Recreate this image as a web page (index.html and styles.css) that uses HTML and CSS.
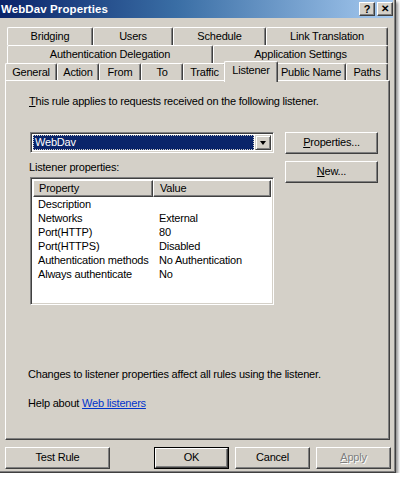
FILE: index.html
```html
<!DOCTYPE html>
<html>
<head>
<meta charset="utf-8">
<link rel="stylesheet" href="styles.css">
</head>
<body>
<div class="window">
  <div class="titlebar">
    <span class="title">WebDav Properties</span>
    <div class="tbtns">
      <span class="tbtn">?</span>
      <span class="tbtn close">✕</span>
    </div>
  </div>
  <div class="tabs">
    <div class="row r1">
      <div class="tab" style="width:86px">Bridging</div>
      <div class="tab" style="width:80px">Users</div>
      <div class="tab" style="width:93px">Schedule</div>
      <div class="tab" style="width:122px">Link Translation</div>
    </div>
    <div class="row r2">
      <div class="tab" style="width:206px">Authentication Delegation</div>
      <div class="tab" style="width:175px">Application Settings</div>
    </div>
    <div class="row r3">
      <div class="tab" style="width:52px">General</div>
      <div class="tab" style="width:42px">Action</div>
      <div class="tab" style="width:42px">From</div>
      <div class="tab" style="width:42px">To</div>
      <div class="tab" style="width:43px">Traffic</div>
      <div class="tab sel" style="width:54px">Listener</div>
      <div class="tab" style="width:70px">Public Name</div>
      <div class="tab" style="width:42px">Paths</div>
    </div>
  </div>
  <div class="panel">
    <p class="intro"><u>T</u>his rule applies to requests received on the following listener.</p>
    <div class="main">
      <div class="leftcol">
        <div class="combo">
          <div class="combo-sel"><span>WebDav</span></div>
          <div class="combo-btn"><span class="arrow"></span></div>
        </div>
        <p class="label">Listener properties:</p>
        <div class="list">
          <div class="lhead">
            <div class="hcol c1">Property</div>
            <div class="hcol c2">Value</div>
          </div>
          <div class="lrow"><span class="c1">Description</span><span class="c2"></span></div>
          <div class="lrow"><span class="c1">Networks</span><span class="c2">External</span></div>
          <div class="lrow"><span class="c1">Port(HTTP)</span><span class="c2">80</span></div>
          <div class="lrow"><span class="c1">Port(HTTPS)</span><span class="c2">Disabled</span></div>
          <div class="lrow"><span class="c1">Authentication methods</span><span class="c2">No Authentication</span></div>
          <div class="lrow"><span class="c1">Always authenticate</span><span class="c2">No</span></div>
        </div>
      </div>
      <div class="rightcol">
        <div class="btn wide"><u>P</u>roperties...</div>
        <div class="btn wide new"><u>N</u>ew...</div>
      </div>
    </div>
    <p class="note">Changes to listener properties affect all rules using the listener.</p>
    <p class="help">Help about <a href="#">Web listeners</a></p>
  </div>
  <div class="buttons">
    <div class="btn test">Test Rule</div>
    <div class="btn def"><div class="inner">OK</div></div>
    <div class="btn">Cancel</div>
    <div class="btn disabled"><u>A</u>pply</div>
  </div>
</div>
</body>
</html>
```
FILE: styles.css
```css
html, body {
  margin: 0;
  padding: 0;
  background: #ffffff;
}
body {
  font-family: "Liberation Sans", Arial, sans-serif;
  font-size: 11px;
  letter-spacing: -0.2px;
  color: #000;
}
p { margin: 0; }
.window {
  width: 396px;
  height: 473px;
  background: #d4d0c8;
  border-right: 1px solid #404040;
  border-bottom: 1px solid #404040;
  box-shadow: inset -1px -1px 0 #808080, 2px 2px 3px rgba(0,0,0,0.45);
  box-sizing: border-box;
}
.titlebar {
  height: 18px;
  margin-right: 2px;
  background: linear-gradient(to right, #0a246a 0%, #3a6ea5 45%, #a6caf0 100%);
  display: flex;
  align-items: center;
  justify-content: space-between;
  padding-left: 1px;
}
.title {
  color: #fff;
  font-weight: bold;
  font-size: 11.5px;
  letter-spacing: 0.1px;
}
.tbtns {
  display: flex;
  gap: 2px;
}
.tbtn {
  width: 16px;
  height: 14px;
  box-sizing: border-box;
  background: #d4d0c8;
  border-top: 1px solid #fff;
  border-left: 1px solid #fff;
  border-right: 1px solid #404040;
  border-bottom: 1px solid #404040;
  box-shadow: inset -1px -1px 0 #808080;
  font-weight: bold;
  font-size: 11px;
  letter-spacing: 0;
  line-height: 12px;
  text-align: center;
  color: #000;
}
.tbtn.close { font-size: 10px; }
.tabs {
  padding-top: 9px;
}
.row {
  display: flex;
  align-items: flex-end;
}
.r1, .r2 { margin-left: 7px; height: 18px; }
.r3 { margin-left: 5px; height: 17px; }
.tab {
  box-sizing: border-box;
  height: 18px;
  border-top: 1px solid #fff;
  border-left: 1px solid #fff;
  border-right: 1px solid #404040;
  box-shadow: inset -1px 0 0 #808080;
  border-radius: 2px 2px 0 0;
  text-align: center;
  line-height: 17px;
  background: #d4d0c8;
  white-space: nowrap;
}
.r3 .tab { height: 17px; line-height: 16px; }
.r3 .tab.sel {
  position: relative;
  z-index: 2;
  height: 21px;
  margin-bottom: -2px;
  margin-left: -2px;
  margin-right: -2px;
  line-height: 17px;
  padding-bottom: 2px;
}
.panel {
  margin-left: 5px;
  width: 385px;
  height: 360px;
  box-sizing: border-box;
  border-top: 1px solid #fff;
  border-left: 1px solid #fff;
  border-right: 1px solid #404040;
  border-bottom: 1px solid #404040;
  box-shadow: inset -1px -1px 0 #808080;
  padding: 14px 0 0 23px;
}
.intro, .label, .note, .help {
  line-height: 13px;
}
.main {
  display: flex;
  margin-top: 24px;
}
.leftcol {
  width: 244px;
  margin-left: 1px;
}
.combo {
  height: 21px;
  box-sizing: border-box;
  border-top: 1px solid #808080;
  border-left: 1px solid #808080;
  border-right: 1px solid #fff;
  border-bottom: 1px solid #fff;
  box-shadow: inset 1px 1px 0 #404040, inset -1px -1px 0 #d4d0c8;
  background: #fff;
  display: flex;
  padding: 2px;
}
.combo-sel {
  flex: 1;
  background: #0a246a;
  color: #fff;
  outline: 1px dotted #d4d0c8;
  outline-offset: -1px;
  line-height: 15px;
  padding-left: 2px;
  margin-right: 1px;
}
.combo-btn {
  width: 16px;
  box-sizing: border-box;
  background: #d4d0c8;
  border-top: 1px solid #d4d0c8;
  border-left: 1px solid #d4d0c8;
  border-right: 1px solid #404040;
  border-bottom: 1px solid #404040;
  box-shadow: inset 1px 1px 0 #fff, inset -1px -1px 0 #808080;
  display: flex;
  align-items: center;
  justify-content: center;
}
.arrow {
  width: 0;
  height: 0;
  border-left: 3.5px solid transparent;
  border-right: 3.5px solid transparent;
  border-top: 4px solid #000;
  margin-top: 1px;
}
.label {
  margin-top: 8px;
  margin-left: -1px;
}
.list {
  margin-top: 3px;
  height: 128px;
  box-sizing: border-box;
  border-top: 1px solid #808080;
  border-left: 1px solid #808080;
  border-right: 1px solid #fff;
  border-bottom: 1px solid #fff;
  box-shadow: inset 1px 1px 0 #404040, inset -1px -1px 0 #d4d0c8;
  background: #fff;
  padding: 2px;
}
.lhead {
  display: flex;
  height: 17px;
}
.hcol {
  box-sizing: border-box;
  height: 17px;
  background: #d4d0c8;
  border-top: 1px solid #fff;
  border-left: 1px solid #fff;
  border-right: 1px solid #404040;
  border-bottom: 1px solid #404040;
  box-shadow: inset -1px -1px 0 #808080;
  line-height: 14px;
  padding-left: 5px;
}
.hcol.c1 { width: 120px; }
.hcol.c2 { flex: 1; padding-left: 6px; }
.lrow {
  display: flex;
  height: 14px;
  line-height: 14px;
}
.lrow .c1 { width: 122px; padding-left: 5px; box-sizing: border-box; white-space: nowrap; }
.lrow .c2 { padding-left: 4px; white-space: nowrap; }
.rightcol {
  margin-left: 11px;
  width: 93px;
}
.btn {
  box-sizing: border-box;
  width: 75px;
  height: 22px;
  background: #d4d0c8;
  border-top: 1px solid #fff;
  border-left: 1px solid #fff;
  border-right: 1px solid #404040;
  border-bottom: 1px solid #404040;
  box-shadow: inset -1px -1px 0 #808080;
  text-align: center;
  line-height: 19px;
}
.btn.wide { width: 93px; }
.btn.new { margin-top: 7px; }
.note {
  margin-top: 63px;
  margin-left: -1px;
}
.help {
  margin-top: 16px;
  margin-left: -1px;
}
.help a {
  color: #0033cc;
  text-decoration: underline;
}
.buttons {
  display: flex;
  margin-top: 7px;
  margin-left: 5px;
  gap: 6px;
}
.btn.test { width: 105px; margin-right: 38px; }
.btn.def {
  border: 1px solid #000;
  box-shadow: none;
  padding: 0;
}
.btn.def .inner {
  height: 100%;
  box-sizing: border-box;
  border-top: 1px solid #fff;
  border-left: 1px solid #fff;
  border-right: 1px solid #404040;
  border-bottom: 1px solid #404040;
  box-shadow: inset -1px -1px 0 #808080;
  line-height: 17px;
}
.btn.disabled {
  color: #808080;
  text-shadow: 1px 1px 0 #fff;
}
```
